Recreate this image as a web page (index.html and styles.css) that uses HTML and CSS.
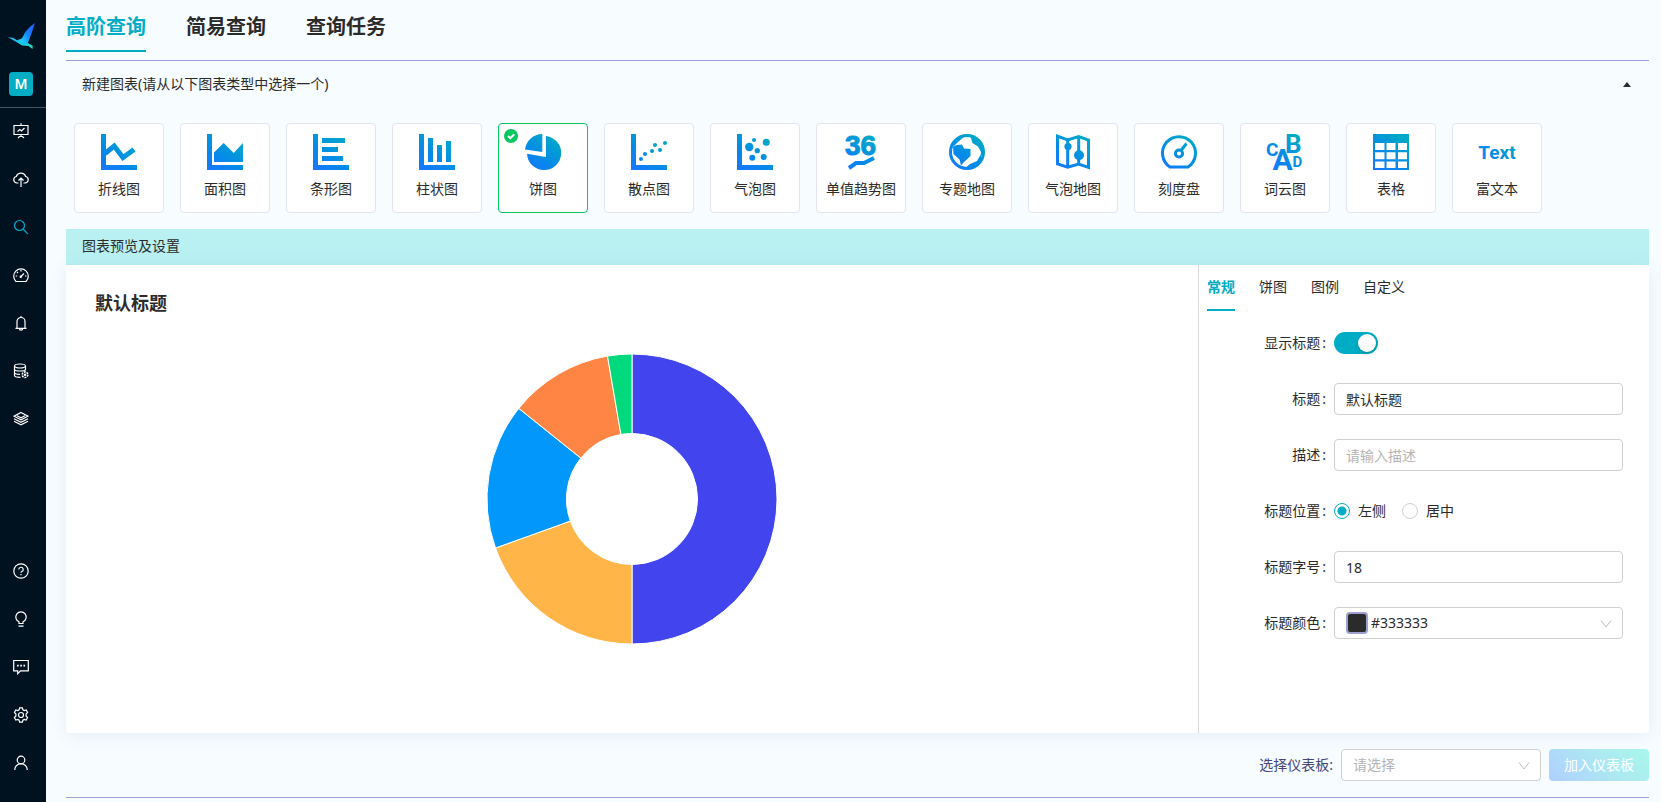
FILE: index.html
```html
<!DOCTYPE html>
<html lang="zh-CN">
<head>
<meta charset="utf-8">
<meta name="viewport" content="width=device-width, initial-scale=1">
<title>高阶查询</title>
<link rel="stylesheet" href="styles.css">
</head>
<body>
<svg class="defs" width="0" height="0" aria-hidden="true">
  <defs>
    <linearGradient id="brand" gradientUnits="userSpaceOnUse" x1="4" y1="36" x2="28" y2="2">
      <stop offset="0" stop-color="#1677ff"/><stop offset=".45" stop-color="#048ce6"/><stop offset="1" stop-color="#00a9c6"/>
    </linearGradient>
    <linearGradient id="wing" x1="1" y1="0" x2="0" y2="1">
      <stop offset="0" stop-color="#2a4fff"/><stop offset=".5" stop-color="#1684ff"/><stop offset="1" stop-color="#22e0f0"/>
    </linearGradient>
    <linearGradient id="body" x1="0" y1="0" x2="1" y2="1">
      <stop offset="0" stop-color="#1fb4e8"/><stop offset=".6" stop-color="#17c8e8"/><stop offset="1" stop-color="#20e3a8"/>
    </linearGradient>
  </defs>
</svg>
<div class="app">
  <nav class="sidebar" aria-label="主导航">
    <a class="logo" href="#" aria-label="首页">
      <svg width="28" height="28" viewBox="0 0 28 28">
        <path fill="url(#body)" d="M0 14.300L5 14.800 9 17.300 14 15.500 20 20 24.700 22.700 24.500 26 20.500 23 14 22.500 8 18.800Z"/>
        <path fill="url(#wing)" d="M27 0C21 4 17 8.500 14.700 14L12 18.500 19.500 21C22 14 24.500 8 27 0Z"/>
      </svg>
    </a>
    <a class="avatar" href="#">M</a>
    <div class="nav-top">
      <a href="#" aria-label="报表"><svg class="i" viewBox="0 0 16 16"><path d="M8 .3v1.700M1 2.500h14v9H1zM4.500 8.500l2.300-2 1.700 1.500 3-3M8 12v1.500M5 15l1.500-1.500h3L11 15"/></svg></a>
      <a href="#" aria-label="上传"><svg class="i" viewBox="0 0 16 16"><path d="M5.500 12H4A3.300 3.300 0 0 1 3.300 5.500 5 5 0 0 1 12.700 5.500 3.300 3.300 0 0 1 12 12h-1.500M8 16V7.500M5.500 9.500L8 7l2.500 2.500"/></svg></a>
      <a class="on" href="#" aria-label="查询"><svg class="i" viewBox="0 0 16 16"><circle cx="6.500" cy="6.500" r="5"/><path d="M10 10l4.800 4.800"/></svg></a>
      <a href="#" aria-label="仪表盘"><svg class="i" viewBox="0 0 16 16"><path d="M3 14.500A7.300 7.300 0 1 1 13 14.500ZM8 9.500l3-3M8 3v1.500M4 5l1 1M2.700 9h1.500M12 9h1.500"/><circle cx="7.800" cy="9.700" r=".6"/></svg></a>
      <a href="#" aria-label="告警"><svg class="i" viewBox="0 0 16 16"><path d="M2.500 13.300h11M4 13V6.500a4 4 0 0 1 8 0V13M8 1v1.500M6.300 13.500a1.700 1.700 0 0 0 3.400 0"/></svg></a>
      <a href="#" aria-label="数据源"><svg class="i" viewBox="0 0 16 16"><ellipse cx="7" cy="3" rx="5.500" ry="2"/><path d="M1.500 3v9.500c0 1 2.500 1.800 6 1.800M12.500 3v4.500M1.500 6.200c0 1 2.500 1.800 5.500 1.800s5.500-.8 5.500-1.800M1.500 9.500c0 1 2.500 1.800 5.500 1.800"/><circle cx="12" cy="11.700" r="2.800" stroke-dasharray="2 .9" stroke-width="1.600"/><circle cx="12" cy="11.700" r=".7"/></svg></a>
      <a href="#" aria-label="数据集"><svg class="i" viewBox="0 0 16 16"><path d="M8 1.500l7 3.700-7 3.700-7-3.700zM1 7.700l7 3.700 7-3.700M1 10.200l7 3.700 7-3.700M4 4.800l4 2 4-2"/></svg></a>
    </div>
    <div class="nav-bottom">
      <a href="#" aria-label="帮助"><svg class="i" viewBox="0 0 16 16"><circle cx="8" cy="8" r="7.200"/><path d="M5.800 6.500a2.200 2.200 0 1 1 3 2c-.6.300-.8.600-.8 1.300M8 11v1.200"/></svg></a>
      <a href="#" aria-label="提示"><svg class="i" viewBox="0 0 16 16"><path d="M6 12.500v-1.700a5.200 5.200 0 1 1 4 0v1.700zM5.500 15.200h5"/></svg></a>
      <a href="#" aria-label="消息"><svg class="i" viewBox="0 0 16 16"><path d="M.7 1.500h14.600v10.300H7.500L4.700 14.700v-2.900h-4z"/><path stroke-width="1.800" d="M4 6.700h1.700M7.200 6.700h1.700M10.400 6.700h1.700"/></svg></a>
      <a href="#" aria-label="设置"><svg class="i" viewBox="0 0 16 16"><circle cx="8" cy="8" r="2.500"/><path d="M6.600.8h2.800l.5 2 1.300.8 2-.6 1.400 2.400L13.100 7v2l1.500 1.600-1.400 2.400-2-.6-1.300.8-.5 2H6.600l-.5-2-1.300-.8-2 .6-1.400-2.400L2.900 9V7L1.400 5.400 2.800 3l2 .6 1.300-.8z"/></svg></a>
      <a href="#" aria-label="用户"><svg class="i" viewBox="0 0 16 16"><circle cx="8" cy="5" r="3.800"/><path d="M1.700 15a6.300 6.300 0 0 1 12.600 0"/></svg></a>
    </div>
  </nav>

  <main class="content">
    <header class="page-tabs" role="tablist">
      <button class="page-tab on" role="tab" aria-selected="true">高阶查询</button>
      <button class="page-tab" role="tab">简易查询</button>
      <button class="page-tab" role="tab">查询任务</button>
    </header>

    <section>
      <button class="fold" aria-expanded="true">
        <span>新建图表(请从以下图表类型中选择一个)</span>
        <svg width="8" height="5" viewBox="0 0 8 5"><path fill="#2b2b2b" d="M4 0L8 5H0z"/></svg>
      </button>
      <div class="types">
        <button class="type"><svg class="pic" viewBox="0 0 36 36"><path d="M0 0h5v31h31v5H0z"/><path class="ln w5" d="M4 19.500L13.200 12 22 23.500 33 15.500"/></svg>折线图</button>
        <button class="type"><svg class="pic" viewBox="0 0 36 36"><path d="M0 0h5v31h31v5H0zM7 18.500L16.700 9 26.700 19 36 9v19H7z"/></svg>面积图</button>
        <button class="type"><svg class="pic" viewBox="0 0 36 36"><path d="M0 0h5v31h31v5H0zM9 4h23v5H9zM9 13h16v5H9zM9 22h21v5H9z"/></svg>条形图</button>
        <button class="type"><svg class="pic" viewBox="0 0 36 36"><path d="M0 0h5v31h31v5H0zM9 4h5v24H9zM18 11h5v17h-5zM27 7h5v21h-5z"/></svg>柱状图</button>
        <button class="type on" aria-pressed="true"><svg class="tick" width="14" height="14" viewBox="0 0 14 14"><circle cx="7" cy="7" r="7" fill="#02c85f"/><path d="M4 7l2.300 2.300L10.300 5.300" fill="none" stroke="#fff" stroke-width="2"/></svg><svg class="pic" viewBox="0 0 36 36"><path d="M17.300 0v18L0 15.500A17.500 17.500 0 0 1 17.300 0zM21 2A17.100 17.100 0 1 1 2 19.700L21 23z"/></svg>饼图</button>
        <button class="type"><svg class="pic" viewBox="0 0 36 36"><path d="M0 0h5v31h31v5H0z"/><circle cx="10" cy="25" r="2"/><circle cx="14" cy="20" r="2"/><circle cx="21" cy="17" r="2"/><circle cx="24" cy="11" r="2"/><circle cx="29" cy="16" r="2"/><circle cx="34" cy="9" r="2"/></svg>散点图</button>
        <button class="type"><svg class="pic" viewBox="0 0 36 36"><path d="M0 0h5v31h31v5H0z"/><circle cx="12.300" cy="13" r="4.200"/><circle cx="17" cy="6" r="2"/><circle cx="29.300" cy="8.300" r="3.500"/><circle cx="20.300" cy="16.700" r="2.600"/><circle cx="15.300" cy="23.700" r="3"/><circle cx="26.700" cy="23" r="3"/></svg>气泡图</button>
        <button class="type"><svg class="pic" viewBox="0 0 36 36"><text class="bold" x="2" y="20.500" font-size="28">36</text><path class="ln w4" d="M6 34L13 29 21 29 31 24"/></svg>单值趋势图</button>
        <button class="type"><svg class="pic" viewBox="0 0 36 36"><circle class="ln w3" cx="18" cy="18" r="16.500"/><path d="M4 12.500L8 11 13 10.500 15 14.500 21.500 15V22L14.500 28.500 12 31.500 10.500 25.500 4.500 20zM20 2L22 4 23.500 9 29 12.500 32 18 31.500 23 35 18A17 17 0 0 0 20 2zM2 10L7 6 12 2 15 3 9 8 5 12zM32 20L28 27 21 30 15 35 24 34 32 28z"/></svg>专题地图</button>
        <button class="type"><svg class="pic" viewBox="0 0 36 36"><path class="ln w3" d="M2.500 2.200L12.700 6 23.700 2.500 33.500 6V33.300L23.700 30 12.700 33.300 2.500 30zM12.700 6V33M23.700 2.500V30"/><circle cx="13" cy="12.500" r="3.600"/><circle cx="24" cy="21.300" r="5"/></svg>气泡地图</button>
        <button class="type"><svg class="pic" viewBox="0 0 36 36"><path class="ln w3" d="M9 33H27A16.500 16.500 0 1 0 9 33zM20 16.500L25.500 9.500"/><circle class="ln w3" cx="18" cy="19.500" r="3.600"/></svg>刻度盘</button>
        <button class="type"><svg class="pic cloud" viewBox="0 0 36 36"><text x="-1" y="21.500" font-size="19">C</text><text x="18" y="19" font-size="26">B</text><text x="5.500" y="36" font-size="30">A</text><text x="25.500" y="33" font-size="15">D</text></svg>词云图</button>
        <button class="type"><svg class="pic" viewBox="0 0 36 36"><path fill-rule="evenodd" d="M0 0h36v36H0zM2 9v7h9.500V9zM13.500 9v7h9V9zM25 9v7h9V9zM2 18.300v7h9.500v-7zM13.500 18.300v7h9v-7zM25 18.300v7h9v-7zM2 27.500v6.500h9.500v-6.500zM13.500 27.500v6.500h9v-6.500zM25 27.500v6.500h9v-6.500z"/></svg>表格</button>
        <button class="type"><svg class="pic cloud" viewBox="0 0 36 36"><text x="18" y="25" font-size="19" text-anchor="middle">Text</text></svg>富文本</button>
      </div>
    </section>

    <h2 class="banner">图表预览及设置</h2>
    <section class="panel">
      <div class="preview">
        <h3>默认标题</h3>
        <svg class="donut" width="290" height="290" viewBox="-145 -145 290 290" role="img" aria-label="饼图预览">
          <g stroke="#fff" stroke-width="1">
            <path fill="#4245ed" d="M0-145A145 145 0 0 1 0 145V65.500A65.500 65.500 0 0 0 0-65.500z"/>
            <path fill="#ffb547" d="M0 145A145 145 0 0 1-136.500 49L-61.700 22.100A65.500 65.500 0 0 0 0 65.500z"/>
            <path fill="#0297fb" d="M-136.500 49A145 145 0 0 1-113.200-90.600L-51.200-40.900A65.500 65.500 0 0 0-61.700 22.100z"/>
            <path fill="#ff8544" d="M-113.200-90.600A145 145 0 0 1-24.500-142.900L-11.100-64.600A65.500 65.500 0 0 0-51.200-40.900z"/>
            <path fill="#00d97c" d="M-24.500-142.900A145 145 0 0 1 0-145V-65.500A65.500 65.500 0 0 0-11.100-64.600z"/>
          </g>
        </svg>
      </div>
      <aside class="settings">
        <div class="set-tabs" role="tablist">
          <button class="set-tab on" role="tab" aria-selected="true">常规</button>
          <button class="set-tab" role="tab">饼图</button>
          <button class="set-tab" role="tab">图例</button>
          <button class="set-tab" role="tab">自定义</button>
        </div>
        <form class="form">
          <label class="lab" for="show">显示标题</label>
          <div class="ctl"><input class="switch" type="checkbox" role="switch" id="show" checked></div>
          <label class="lab" for="title">标题</label>
          <div class="ctl"><input class="box" type="text" id="title" value="默认标题"></div>
          <label class="lab" for="desc">描述</label>
          <div class="ctl"><input class="box" type="text" id="desc" placeholder="请输入描述"></div>
          <span class="lab" id="pos">标题位置</span>
          <div class="ctl radios" role="radiogroup" aria-labelledby="pos">
            <label><input type="radio" name="pos" checked>左侧</label>
            <label><input type="radio" name="pos">居中</label>
          </div>
          <label class="lab" for="size">标题字号</label>
          <div class="ctl"><input class="box" type="text" id="size" value="18"></div>
          <label class="lab" for="color">标题颜色</label>
          <div class="ctl picker">
            <select class="box has-swatch" id="color"><option>#333333</option></select>
            <span class="swatch"></span>
            <svg class="chev" width="12" height="12" viewBox="0 0 12 12"><path d="M1 2.500l5 6.500 5-6.500"/></svg>
          </div>
        </form>
      </aside>
    </section>

    <footer class="actions">
      <label for="board">选择仪表板:</label>
      <div class="picker board">
        <select class="box empty" id="board"><option>请选择</option></select>
        <svg class="chev" width="12" height="12" viewBox="0 0 12 12"><path d="M1 2.500l5 6.500 5-6.500"/></svg>
      </div>
      <button class="add" disabled>加入仪表板</button>
    </footer>
  </main>
</div>
</body>
</html>
```
FILE: styles.css
```css
* { box-sizing: border-box; }
body {
  margin: 0;
  background: #f7fcff;
  color: #2b2b2b;
  font: 14px/22px "Noto Sans", "Noto Sans CJK SC", sans-serif;
}
button, input, select { font: inherit; color: inherit; }
button { border: 0; padding: 0; background: none; cursor: pointer; }
h2, h3 { margin: 0; }
.defs { position: absolute; }
.app { display: flex; min-height: 100vh; }

.sidebar {
  flex: 0 0 46px;
  display: flex;
  flex-direction: column;
  background: #001220;
  padding-bottom: 15px;
}
.sidebar a { color: #fff; text-decoration: none; }
.logo { height: 28px; margin: 23px 0 21px 8px; }
.logo svg { display: block; }
.avatar {
  width: 24px;
  height: 24px;
  margin-left: 9px;
  border-radius: 4px;
  background: #00adc5;
  text-align: center;
  line-height: 24px;
  font-weight: 600;
}
.nav-top { margin-top: 11px; box-shadow: inset 0 1px #47545f; }
.nav-bottom { margin-top: auto; }
.nav-top a, .nav-bottom a {
  display: flex;
  align-items: center;
  height: 48px;
  padding-left: 13px;
}
.sidebar a.on { color: #00adc5; }
.i { width: 16px; height: 16px; fill: none; stroke: currentColor; stroke-width: 1.2; }

.content { flex: 1; min-width: 0; padding: 0 12px 3px 20px; }
.page-tabs {
  display: flex;
  gap: 40px;
  padding-bottom: 8px;
  border-bottom: 1px solid #a09fd6;
}
.page-tab {
  padding: 12px 0 8px;
  border-bottom: 2px solid transparent;
  font-size: 20px;
  line-height: 30px;
  font-weight: 700;
}
.page-tab.on, .set-tab.on { color: #00adc5; border-color: #00adc5; }

.fold {
  display: flex;
  align-items: center;
  justify-content: space-between;
  width: 100%;
  height: 46px;
  padding: 0 18px 0 16px;
}
.types { display: flex; flex-wrap: wrap; gap: 16px; padding: 16px 8px; }
.type {
  position: relative;
  display: flex;
  flex-direction: column;
  align-items: center;
  gap: 8px;
  width: 90px;
  height: 90px;
  padding-top: 10px;
  border: 1px solid #e3e3f1;
  border-radius: 4px;
  background: #fff;
  white-space: nowrap;
}
.type.on { border-color: #02c85f; }
.tick { position: absolute; left: 5px; top: 5px; }
.pic { width: 36px; height: 36px; fill: url(#brand); overflow: visible; }
.pic text { font-family: "Liberation Sans", sans-serif; font-weight: 700; }
.pic .bold { stroke: url(#brand); stroke-width: 1; }
.cloud text { font-family: Roboto, sans-serif; }
.ln { fill: none; stroke: url(#brand); }
.w3 { stroke-width: 3; }
.w4 { stroke-width: 4; }
.w5 { stroke-width: 5; }

.banner {
  padding: 6px 16px 8px;
  background: #b9f1f3;
  font-size: 14px;
  font-weight: 400;
}
.panel {
  display: flex;
  min-height: 468px;
  border-radius: 4px;
  background: #fff;
  box-shadow: 0 2px 20px rgba(20, 80, 130, .08);
}
.preview { flex: 1; padding: 24px 29px; }
.preview h3 { font-size: 18px; line-height: 28px; }
.donut { display: block; margin: 37px auto 0; }

.settings { flex: 0 0 451px; border-left: 1px solid #d9d9d9; padding: 0 26px 0 8px; }
.set-tabs { display: flex; gap: 24px; }
.set-tab { padding: 11px 0; border-bottom: 2px solid transparent; }
.set-tab.on { font-weight: 700; }
.form {
  display: grid;
  grid-template-columns: 119px 1fr;
  column-gap: 8px;
  row-gap: 24px;
  padding-top: 16px;
}
.lab { line-height: 32px; text-align: right; }
.lab::after { content: ":"; margin-left: 2px; }
.ctl { display: flex; align-items: center; height: 32px; }
.box {
  width: 100%;
  height: 32px;
  padding: 0 11px;
  border: 1px solid #d0d0d0;
  border-radius: 4px;
  background: #fff;
  outline: 0;
  appearance: none;
}
.box::placeholder { color: #b5b5b5; }
.box.empty { color: #b5b5b5; }
.box.has-swatch { padding-left: 36px; }
.switch {
  display: flex;
  justify-content: flex-end;
  width: 44px;
  height: 22px;
  margin: 0;
  padding: 2px;
  border-radius: 11px;
  background: #00adc5;
  appearance: none;
}
.switch::before {
  content: "";
  width: 18px;
  height: 18px;
  border-radius: 50%;
  background: #fff;
  box-shadow: 0 2px 4px rgba(0, 35, 11, .2);
}
.radios { gap: 16px; }
.radios label { display: flex; align-items: center; gap: 8px; }
.radios input {
  width: 16px;
  height: 16px;
  margin: 0;
  border: 1px solid #d0d0d0;
  border-radius: 50%;
  background: #fff;
  appearance: none;
}
.radios input:checked {
  border-color: #00adc5;
  background: radial-gradient(circle, #00adc5 4px, #fff 5px);
}
.picker { position: relative; }
.swatch {
  position: absolute;
  left: 12px;
  top: 5px;
  width: 22px;
  height: 22px;
  border: 2px solid #9f9fd0;
  border-radius: 4px;
  background: #2b2b2b;
  pointer-events: none;
}
.chev {
  position: absolute;
  right: 11px;
  top: 11px;
  fill: none;
  stroke: #bfbfbf;
  pointer-events: none;
}
.actions {
  display: flex;
  align-items: center;
  justify-content: flex-end;
  gap: 8px;
  padding: 16px 0;
  border-bottom: 1px solid #a09fd6;
  color: #46467a;
}
.board { width: 200px; height: 32px; }
.add {
  width: 100px;
  height: 32px;
  border-radius: 4px;
  background: linear-gradient(45deg, #b0cfff, #aceaf0 60%, #a9f7ec);
  color: #fff;
}
```
